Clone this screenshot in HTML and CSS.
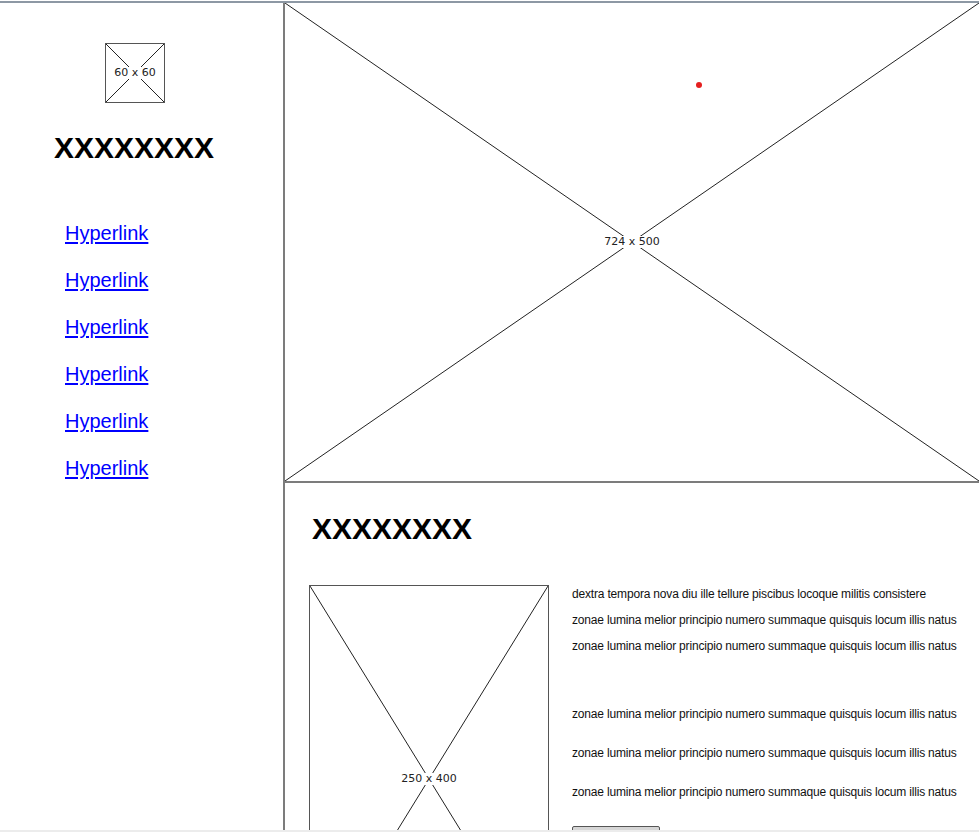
FILE: index.html
```html
<!DOCTYPE html>
<html>
<head>
<meta charset="utf-8">
<link rel="stylesheet" href="styles.css">
</head>
<body>
<div class="frame">
  <aside class="sidebar">
    <div class="ph logo">
      <svg class="ph-x" viewBox="0 0 100 100" preserveAspectRatio="none"><line x1="0" y1="0" x2="100" y2="100"/><line x1="100" y1="0" x2="0" y2="100"/></svg>
      <span class="ph-label">60 x 60</span>
    </div>
    <h1 class="title side-title">XXXXXXXX</h1>
    <nav class="links">
      <a href="#">Hyperlink</a>
      <a href="#">Hyperlink</a>
      <a href="#">Hyperlink</a>
      <a href="#">Hyperlink</a>
      <a href="#">Hyperlink</a>
      <a href="#">Hyperlink</a>
    </nav>
  </aside>
  <main class="main">
    <div class="ph hero">
      <svg class="ph-x" viewBox="0 0 100 100" preserveAspectRatio="none"><line x1="0" y1="0" x2="100" y2="100"/><line x1="100" y1="0" x2="0" y2="100"/></svg>
      <span class="ph-label">724 x 500</span>
      <span class="dot"></span>
    </div>
    <section class="content">
      <h2 class="title main-title">XXXXXXXX</h2>
      <div class="row">
        <div class="ph tall">
          <svg class="ph-x" viewBox="0 0 100 100" preserveAspectRatio="none"><line x1="0" y1="0" x2="100" y2="100"/><line x1="100" y1="0" x2="0" y2="100"/></svg>
          <span class="ph-label">250 x 400</span>
        </div>
        <div class="text">
          <div class="block dense">
            <p>dextra tempora nova diu ille tellure piscibus locoque militis consistere</p>
            <p>zonae lumina melior principio numero summaque quisquis locum illis natus</p>
            <p>zonae lumina melior principio numero summaque quisquis locum illis natus</p>
          </div>
          <div class="block loose">
            <p>zonae lumina melior principio numero summaque quisquis locum illis natus</p>
            <p>zonae lumina melior principio numero summaque quisquis locum illis natus</p>
            <p>zonae lumina melior principio numero summaque quisquis locum illis natus</p>
          </div>
          <button class="btn" type="button"></button>
        </div>
      </div>
    </section>
  </main>
</div>
</body>
</html>
```
FILE: styles.css
```css
html, body {
  margin: 0;
  padding: 0;
  background: #fff;
}
body {
  width: 979px;
  height: 832px;
  overflow: hidden;
  font-family: "Liberation Sans", Arial, sans-serif;
  color: #111;
}
.frame {
  margin-top: 1px;
  border-top: 2px solid #8d98a4;
  height: 827px;
  border-bottom: 2px solid #ececec;
  display: grid;
  grid-template-columns: 285px 1fr;
  overflow: hidden;
}
.sidebar {
  border-right: 2px solid #7c7c7c;
  padding-top: 40px;
  display: flex;
  flex-direction: column;
}
.ph {
  position: relative;
  box-sizing: border-box;
  border: 1px solid #555;
  background: #fff;
}
.ph-x {
  position: absolute;
  inset: 0;
  width: 100%;
  height: 100%;
}
.ph-x line {
  stroke: #222;
  stroke-width: 1;
  vector-effect: non-scaling-stroke;
}
.ph-label {
  position: absolute;
  left: 50%;
  top: 50%;
  transform: translate(-50%, -50%);
  background: #fff;
  font-family: "DejaVu Sans", sans-serif;
  font-size: 11px;
  line-height: 12px;
  color: #222;
  white-space: nowrap;
  padding: 0 1px;
}
.logo {
  width: 60px;
  height: 60px;
  margin-left: 105px;
}
.title {
  margin: 0;
  font-family: "Liberation Sans", sans-serif;
  font-weight: bold;
  font-size: 30px;
  line-height: 30px;
  color: #000;
}
.side-title {
  margin: 30px 0 0 54px;
}
.links {
  display: flex;
  flex-direction: column;
  margin: 58px 0 0 65px;
  gap: 23px;
}
.links a {
  font-family: "Liberation Sans", sans-serif;
  font-size: 20px;
  line-height: 24px;
  color: #0000ff;
  text-decoration: underline;
  text-underline-offset: 2px;
}
.main {
  display: flex;
  flex-direction: column;
  min-width: 0;
}
.hero {
  height: 480px;
  border: none;
  border-bottom: 2px solid #7c7c7c;
  flex: none;
}
.dot {
  position: absolute;
  left: 411px;
  top: 79px;
  width: 6px;
  height: 6px;
  border-radius: 50%;
  background: #e51f1f;
}
.content {
  padding: 31px 0 0 24px;
}
.main-title {
  margin-left: 3px;
}
.row {
  display: flex;
  gap: 23px;
  margin-top: 41px;
  align-items: flex-start;
}
.tall {
  width: 240px;
  height: 388px;
  flex: none;
}
.text {
  font-size: 12px;
  letter-spacing: -0.18px;
  color: #111;
  margin-top: -4px;
}
.text p {
  margin: 0;
  white-space: nowrap;
}
.dense p {
  line-height: 26px;
}
.loose {
  margin-top: 36px;
}
.loose p {
  line-height: 39px;
}
.btn {
  display: block;
  margin-top: 14px;
  width: 88px;
  height: 24px;
  border: 1px solid #555;
  border-radius: 2px;
  background: #d6d6d6;
  padding: 0;
}
```
